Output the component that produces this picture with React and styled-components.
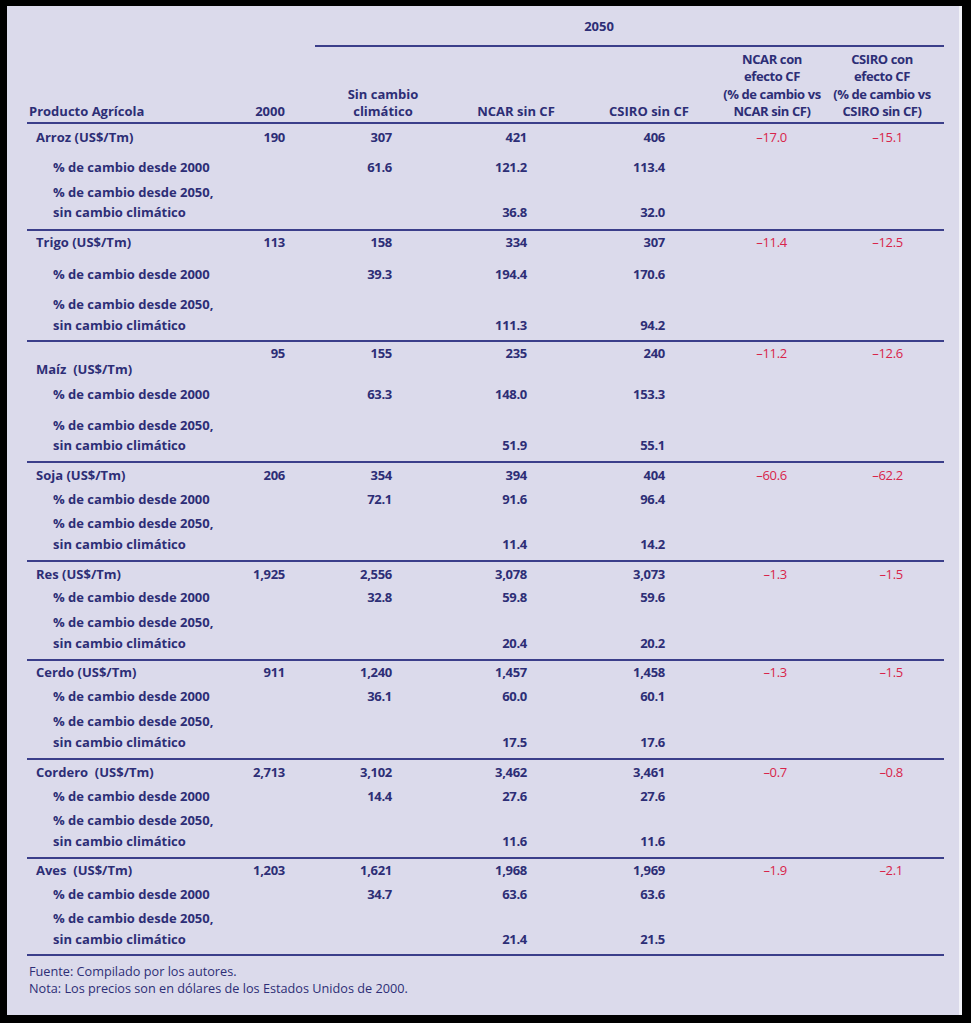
import React from 'react';
import styled, { createGlobalStyle } from 'styled-components';

const INK = '#2d2e76';
const RED = '#d8244a';
const RULE = '#3b3e8a';

const Global = createGlobalStyle`
  html, body { margin: 0; padding: 0; background: #000; }
  body { font-family: "Open Sans", Lato, "DejaVu Sans", sans-serif; }
`;

const Frame = styled.div`
  width: 971px;
  height: 1023px;
  box-sizing: border-box;
  background: #000;
  padding: 6px 9px 8px 7px;
`;

const Sheet = styled.div`
  height: 100%;
  box-sizing: border-box;
  background: #dbdaeb;
  border-right: 3px solid #f2f2f8;
  padding: 0 15px 0 20px;
  color: ${INK};
  font-size: 13px;
  font-weight: 700;
`;

const YearHead = styled.div`
  margin-left: 288px;
  padding: 11px 61px 10px 0;
  text-align: center;
  line-height: 18px;
  border-bottom: 2px solid ${RULE};
`;

const Grid = styled.div`
  display: grid;
  grid-template-columns: 205px 76px 150px 116px 150px 96px 124px;
`;

const HeadRow = styled(Grid)`
  align-items: end;
  padding: 4px 0 2px;
  line-height: 17.3px;
  border-bottom: 2px solid ${RULE};
`;

const HeadCell = styled.div`
  display: flex;
  flex-direction: column;
  align-items: ${(p) => (p.$left ? 'flex-start' : 'center')};
  padding-left: ${(p) => (p.$left ? '2px' : '0')};
  letter-spacing: ${(p) => (p.$tight ? '-0.4px' : '0')};
  white-space: nowrap;
`;

const Section = styled.section`
  border-bottom: 2px solid ${RULE};
  padding-bottom: ${(p) => p.$pb}px;
`;

const Row = styled(Grid)`
  margin-top: ${(p) => p.$mt}px;
  line-height: ${(p) => p.$lh || 20}px;
  align-items: ${(p) => p.$align || 'start'};
`;

const Label = styled.div`
  padding-left: ${(p) => p.$indent}px;
  padding-top: ${(p) => p.$pt || 0}px;
  white-space: pre;
`;

const PAD = [23, 66, 47, 59, 33, 41];

const Num = styled.div`
  text-align: right;
  padding-right: ${(p) => PAD[p.$col]}px;
  color: ${(p) => (p.$neg ? RED : INK)};
  font-weight: ${(p) => (p.$neg ? 400 : 700)};
  letter-spacing: -0.3px;
  white-space: nowrap;
`;

const Footer = styled.div`
  margin-top: 6.5px;
  padding-left: 2px;
  font-size: 12.7px;
  font-weight: 400;
  line-height: 17px;
`;

const DATA = [
  {
    name: 'Arroz (US$/Tm)',
    base: ['190', '307', '421', '406', '–17.0', '–15.1'],
    pct: ['61.6', '121.2', '113.4'],
    chg: ['36.8', '32.0'],
    mt: [3, 10, 5], lh: 20, pb: 7,
  },
  {
    name: 'Trigo (US$/Tm)',
    base: ['113', '158', '334', '307', '–11.4', '–12.5'],
    pct: ['39.3', '194.4', '170.6'],
    chg: ['111.3', '94.2'],
    mt: [1, 12, 9.5], lh: 21, pb: 4.5,
  },
  {
    name: 'Maíz  (US$/Tm)',
    base: ['95', '155', '235', '240', '–11.2', '–12.6'],
    pct: ['63.3', '148.0', '153.3'],
    chg: ['51.9', '55.1'],
    mt: [1, 5, 11], lh: 20, pb: 6, drop: 16,
  },
  {
    name: 'Soja (US$/Tm)',
    base: ['206', '354', '394', '404', '–60.6', '–62.2'],
    pct: ['72.1', '91.6', '96.4'],
    chg: ['11.4', '14.2'],
    mt: [2, 4, 3.5], lh: 21, pb: 5.5,
  },
  {
    name: 'Res (US$/Tm)',
    base: ['1,925', '2,556', '3,078', '3,073', '–1.3', '–1.5'],
    pct: ['32.8', '59.8', '59.6'],
    chg: ['20.4', '20.2'],
    mt: [2, 3, 4.5], lh: 21, pb: 5.5,
  },
  {
    name: 'Cerdo (US$/Tm)',
    base: ['911', '1,240', '1,457', '1,458', '–1.3', '–1.5'],
    pct: ['36.1', '60.0', '60.1'],
    chg: ['17.5', '17.6'],
    mt: [1, 4, 4.5], lh: 21, pb: 5.5,
  },
  {
    name: 'Cordero  (US$/Tm)',
    base: ['2,713', '3,102', '3,462', '3,461', '–0.7', '–0.8'],
    pct: ['14.4', '27.6', '27.6'],
    chg: ['11.6', '11.6'],
    mt: [2, 4, 3.5], lh: 21, pb: 5.5,
  },
  {
    name: 'Aves  (US$/Tm)',
    base: ['1,203', '1,621', '1,968', '1,969', '–1.9', '–2.1'],
    pct: ['34.7', '63.6', '63.6'],
    chg: ['21.4', '21.5'],
    mt: [1, 4, 3.5], lh: 21, pb: 4.5,
  },
];

function Product({ d }) {
  return (
    <Section $pb={d.pb}>
      <Row $mt={d.mt[0]}>
        <Label $indent={9} $pt={d.drop}>{d.name}</Label>
        {d.base.map((v, i) => (
          <Num key={i} $col={i} $neg={i >= 4}>{v}</Num>
        ))}
      </Row>
      <Row $mt={d.mt[1]}>
        <Label $indent={26}>% de cambio desde 2000</Label>
        <div />
        {d.pct.map((v, i) => (
          <Num key={i} $col={i + 1}>{v}</Num>
        ))}
      </Row>
      <Row $mt={d.mt[2]} $lh={d.lh} $align="end">
        <Label $indent={26}>{'% de cambio desde 2050,\nsin cambio climático'}</Label>
        <div />
        <div />
        {d.chg.map((v, i) => (
          <Num key={i} $col={i + 2}>{v}</Num>
        ))}
      </Row>
    </Section>
  );
}

export default function App() {
  return (
    <>
      <Global />
      <Frame>
        <Sheet>
          <YearHead>2050</YearHead>
          <HeadRow>
            <HeadCell $left><span>Producto Agrícola</span></HeadCell>
            <HeadCell><span>2000</span></HeadCell>
            <HeadCell><span>Sin cambio</span><span>climático</span></HeadCell>
            <HeadCell><span>NCAR sin CF</span></HeadCell>
            <HeadCell><span>CSIRO sin CF</span></HeadCell>
            <HeadCell $tight>
              <span>NCAR con</span>
              <span>efecto CF</span>
              <span>(% de cambio vs</span>
              <span>NCAR sin CF)</span>
            </HeadCell>
            <HeadCell $tight>
              <span>CSIRO con</span>
              <span>efecto CF</span>
              <span>(% de cambio vs</span>
              <span>CSIRO sin CF)</span>
            </HeadCell>
          </HeadRow>
          {DATA.map((d) => (
            <Product key={d.name} d={d} />
          ))}
          <Footer>
            Fuente: Compilado por los autores.
            <br />
            Nota: Los precios son en dólares de los Estados Unidos de 2000.
          </Footer>
        </Sheet>
      </Frame>
    </>
  );
}
